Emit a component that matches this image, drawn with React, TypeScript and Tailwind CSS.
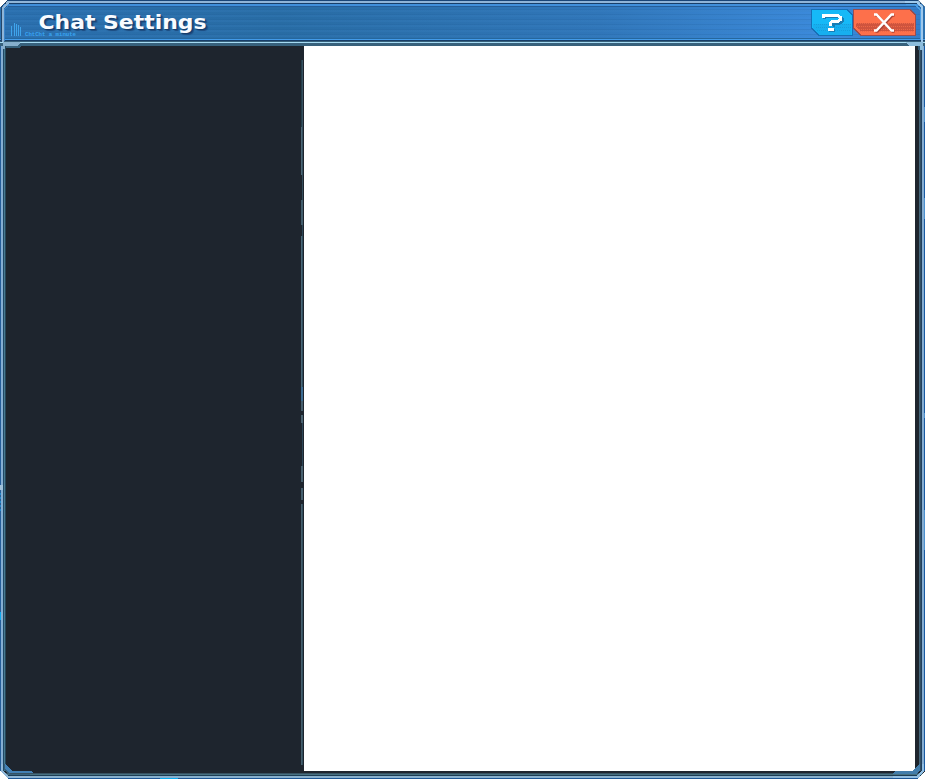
import React from "react";

function TitleText() {
  return (
    <svg width="220" height="38" viewBox="0 0 220 38" className="block shrink-0">
      <g fill="#3fa4ec" shapeRendering="crispEdges">
        <rect x="11" y="26" width="1" height="10" />
        <rect x="14" y="23" width="1" height="13" />
        <rect x="16" y="24" width="1" height="12" />
        <rect x="18" y="25" width="1" height="11" />
        <rect x="20" y="27" width="1" height="9" />
      </g>
      <text x="25" y="36" textLength="51" lengthAdjust="spacingAndGlyphs" fontFamily="Liberation Mono, monospace" fontWeight="700" fontSize="5" fill="#39a5f3">ChtCht a minute</text>
      <text x="38.5" y="29" textLength="168" lengthAdjust="spacingAndGlyphs" fontFamily="DejaVu Sans, sans-serif" fontWeight="700" fontSize="19" fill="#f8fbff" className="[text-shadow:1px_1px_0_#163d6c,2px_2px_1px_#1d4b7f]">Chat Settings</text>
    </svg>
  );
}

function HelpButton() {
  return (
    <button aria-label="Help" className="block h-[28px] w-[42px]">
      <svg width="42" height="28" viewBox="0 0 42 28" shapeRendering="crispEdges">
        <path d="M.5.5H36l5 5v21H8l-7-7Z" fill="#16b9f7" stroke="#1670b8" />
        <path d="M2 15h38v11H8l-6-7Z" fill="#17afef" />
        <path d="M3 15.5h37M5 18.5h35M6 21.5h34" stroke="#169fdc" strokeDasharray="1 1" />
        <path d="M13 10V8M14 7.5h14l3 2v3l-3 2h-5l-1 3M18 21.5h6" fill="none" stroke="#187eb6" strokeWidth="3" />
        <path d="M12 9V6.5h15l2.5 2v2l-2.5 2h-6l-2 2v2M17 20.5h6" fill="none" stroke="#fff" strokeWidth="3" />
      </svg>
    </button>
  );
}

function CloseButton() {
  return (
    <button aria-label="Close" className="block h-[28px] w-[63px]">
      <svg width="63" height="28" viewBox="0 0 63 28">
        <g shapeRendering="crispEdges">
          <path d="M.5.5H57l5 5v21H8l-7-7Z" fill="#fd704b" stroke="#984d50" />
          <path d="M3 14h58v8H7l-4-4Z" fill="#cf543e" />
          <path d="M3 14.5h58M4 17.5h57M6 20.5h55M7 22.5h54" stroke="#ec6848" strokeDasharray="1 1" />
        </g>
        <path d="M22.5 6.5h2l15 16h2M41.5 6.5h-2l-15 16h-2" fill="none" stroke="#a94134" strokeWidth="2.5" />
        <path d="M21 5.5h2.5l15 16H41M41 5.5h-2.5l-15 16H21" fill="none" stroke="#fff" strokeWidth="2.4" />
      </svg>
    </button>
  );
}

function FrameDetails() {
  return (
    <svg className="pointer-events-none absolute inset-0" width="925" height="779" viewBox="0 0 925 779" shapeRendering="crispEdges">
      {/* Upper corners */}
      <path d="M0 0h7L0 7Z" fill="#fff" />
      <path d="M4.5 41V9.5L9.5 4.5H20" fill="none" stroke="#3a83c8" />
      <path d="M3 42V8l6-6h12" fill="none" stroke="#8fb5d7" strokeWidth="2" />
      <path d="M1 42V7l6-6" fill="none" stroke="#25476b" />
      <path d="M918 0h7v7Z" fill="#fff" />
      <path d="M905 2h12l5 5v35" fill="none" stroke="#9fc9ec" strokeWidth="2" />
      <path d="M918 0l7 7" stroke="#62839f" />
      <path d="M906 4.5h9l5 5V40" fill="none" stroke="#4b9ee5" />
      {/* Header shoulders */}
      <path d="M3 42h17v1l-3 3H5v3H3Z" fill="#86afcd" />
      <path d="M6 46h12l2-2h3l-4 4H6Z" fill="#37617c" />
      <path d="M905 42h18v8h-3v-4h-10Z" fill="#8dbddd" />
      <path d="M918 46h2v4h-2Z" fill="#315b78" />
      {/* Lower corners */}
      <path d="M0 771v8h8Z" fill="#fff" />
      <path d="M5 764v5l5 4h24l-3-2H12Z" fill="#4280b5" />
      <path d="M4.5 764v5l5 5H30" fill="none" stroke="#37617c" />
      <path d="M2 764v7l6 6h22" fill="none" stroke="#90b7d7" strokeWidth="2" />
      <path d="M925 771v8h-8Z" fill="#fff" />
      <path d="m893 773 3-2h16l8-8v7l-4 4h-23Z" fill="#427dab" />
      <path d="M923 764v7l-6 6h-24" fill="none" stroke="#91bfe3" strokeWidth="2" />
      {/* Glints in the outer edge */}
      <path d="M.5 612v8M160 778.5h18" stroke="#08a9ef" />
      <path d="M.5 493v20" stroke="#2388ca" strokeDasharray="2 2" />
      <path d="M0 487.5h3" stroke="#a1c2db" strokeWidth="5" />
      <path d="M924.5 107v15m0 76v21m0 194v5m0 92v40" stroke="#4d91d0" />
    </svg>
  );
}

export default function App() {
  return (
    <main className="relative flex h-[779px] w-[925px] flex-col overflow-hidden bg-[#1e252e]">
      <header className="h-[46px] w-full shrink-0 bg-[linear-gradient(to_bottom,#194578_0_1px,#8fb4d8_1px_3px,#173e69_3px_4px,#408fdb_4px_6px,#265e98_6px_7px,#2c72b1_7px_38px,#25679e_38px_39px,#439be9_39px_40px,#173d67_40px_41px,#37617c_41px_42px,#a5daf3_42px_43px,#37617c_43px_46px)]">
        <div className="flex h-[39px] items-start pt-[7px]">
          <div className="mx-[5px] flex h-[31px] w-[915px] items-start justify-between bg-[repeating-linear-gradient(to_bottom,transparent_0_2px,#205d9833_2px_3px,#3c83c433_3px_5px),linear-gradient(to_right,#2a6fae,#286ca4_30%,#3076b9_65%,#3c8bdd_90%,#347cc9)]">
            <div className="-mt-[7px] -ml-[5px]"><TitleText /></div>
            <div className="mr-[4px] flex gap-0 pt-[2px]"><HelpButton /><CloseButton /></div>
          </div>
        </div>
      </header>
      <div className="flex h-[725px] shrink-0">
        <div className="w-[6px] shrink-0 bg-[linear-gradient(to_right,#255e9a_0_1px,#86aed2_1px_3px,#204966_3px_4px,#477990_4px_5px,#25465b_5px_6px)]" />
        <aside className="flex w-[298px] shrink-0 justify-end bg-[#1e252e] pr-[1px] pt-[14px] pb-[6px]">
          <div className="flex w-[2px] flex-col">
            <div className="h-[67px] w-full bg-[linear-gradient(to_right,#253f4b_50%,#375160_50%)]" />
            <div className="h-[48px] w-full bg-[linear-gradient(to_right,#4d6877_50%,#36505f_50%)]" />
            <div className="ml-[1px] h-[25px] w-px bg-[#344d5c]" />
            <div className="h-[25px] w-full bg-[#425d6c]" />
            <div className="ml-[1px] h-[11px] w-px bg-[#2c4657]" />
            <div className="h-[151px] w-full bg-[linear-gradient(to_right,#4b6979_50%,#304e5e_50%)]" />
            <div className="h-[14px] w-full bg-[#3c6c92]" />
            <div className="h-[10px] w-full bg-[#465e6d]" />
            <div className="mt-[4px] h-[8px] w-full bg-[#4b6472]" />
            <div className="ml-[1px] h-[43px] w-px bg-[#2c4657]" />
            <div className="h-[16px] w-full bg-[#48616f]" />
            <div className="mt-[6px] h-[12px] w-full bg-[#455f6e]" />
            <div className="mt-[4px] flex-1 bg-[linear-gradient(to_right,#47606e_50%,#324e5d_50%)]" />
          </div>
        </aside>
        <section className="w-[611px] shrink-0 bg-white" />
        <div className="w-[10px] shrink-0 bg-[linear-gradient(to_right,#1e252e_0_4px,#456579_4px_5px,#334f64_5px_6px,#21405c_6px_7px,#86aed2_7px_9px,#195aa3_9px_10px)]" />
      </div>
      <footer className="h-[8px] shrink-0 bg-[linear-gradient(to_bottom,#1e252e_0_2px,#375161_2px_3px,#477181_3px_4px,#1d3d54_4px_5px,#88b0cd_5px_7px,#1c5696_7px_8px)]" />
      <FrameDetails />
    </main>
  );
}
